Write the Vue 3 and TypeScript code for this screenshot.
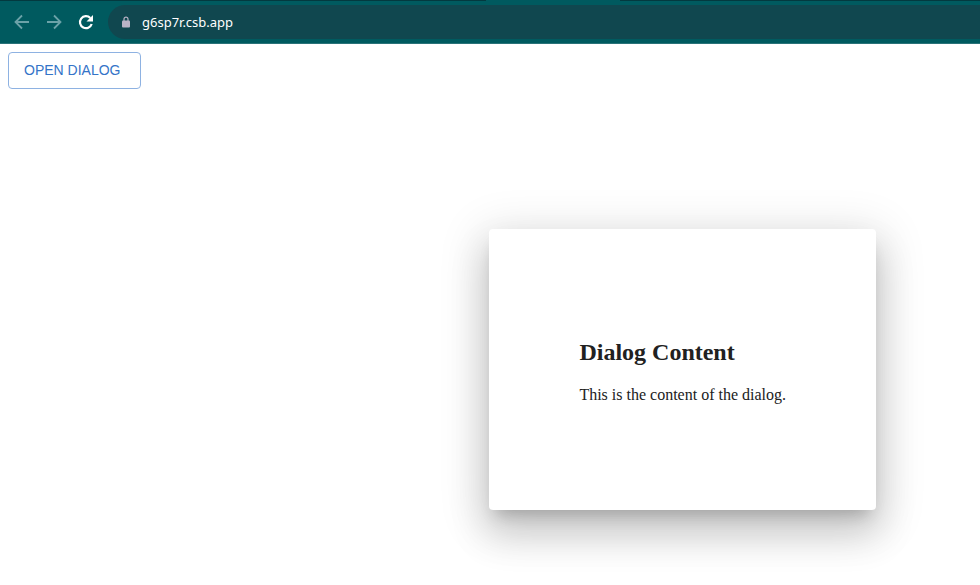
<script setup lang="ts">
import { ref } from 'vue'

const address = ref('g6sp7r.csb.app')
const open = ref(true)
</script>

<template>
  <div class="browser">
    <div class="tab-strip"><div class="active-tab"></div></div>
    <header class="toolbar">
      <nav class="nav" aria-label="Browser navigation">
        <button class="icon-button dim" type="button" aria-label="Back">
          <svg viewBox="0 0 20 20"><path d="M17 10H4M10 3.500L3.500 10l6.500 6.500" /></svg>
        </button>
        <button class="icon-button dim" type="button" aria-label="Forward">
          <svg viewBox="0 0 20 20"><path d="M3 10h13M10 3.500l6.500 6.500-6.500 6.500" /></svg>
        </button>
        <button class="icon-button reload" type="button" aria-label="Reload">
          <svg viewBox="0 0 20 20"><path d="M14.300 6A6 6 0 1 0 15.700 12" /><path class="solid" d="M17 3v6.500h-6.500z" /></svg>
        </button>
      </nav>
      <label class="address">
        <svg class="lock" viewBox="0 0 10 12"><rect x="1" y="4.500" width="8" height="7" rx="1" /><path d="M3 5V3.200a2 2 0 0 1 4 0V5" fill="none" stroke="currentColor" stroke-width="1.200" /></svg>
        <input v-model="address" type="text" aria-label="Address" spellcheck="false" />
      </label>
    </header>
    <main class="page">
      <button class="open-button" type="button" @click="open = true">OPEN DIALOG</button>
      <section v-if="open" class="dialog" role="dialog" aria-labelledby="dialog-title">
        <h2 id="dialog-title">Dialog Content</h2>
        <p>This is the content of the dialog.</p>
      </section>
    </main>
  </div>
</template>

<style>
body {
  background: #fff;
}
</style>

<style scoped>
.browser {
  display: flex;
  flex-direction: column;
  min-height: 100vh;
  overflow: hidden;
}
.tab-strip {
  height: 1px;
  padding-left: 486px;
  background: #03393f;
}
.active-tab {
  width: 134px;
  height: 1px;
  background: #005a5f;
}
.toolbar {
  display: flex;
  align-items: center;
  box-sizing: border-box;
  height: 43px;
  padding-left: 12px;
  gap: 12px;
  border-bottom: 1px solid #2a7278;
  background: #005a5f;
}
.nav {
  display: flex;
  gap: 12px;
}
.icon-button {
  display: flex;
  padding: 0;
  border: 0;
  background: none;
  color: #fff;
}
.icon-button.dim {
  color: #6ba2a8;
}
.icon-button svg {
  width: 20px;
  height: 20px;
  fill: none;
  stroke: currentColor;
  stroke-width: 1.8;
}
.icon-button.reload svg {
  stroke-width: 2.2;
}
.icon-button .solid {
  fill: currentColor;
  stroke: none;
}
.address {
  display: flex;
  flex: 1;
  align-items: center;
  gap: 11px;
  height: 34px;
  padding-left: 13px;
  border-radius: 17px 0 0 17px;
  background: #10474f;
}
.lock {
  width: 10px;
  height: 12px;
  color: #b9b3c6;
  fill: currentColor;
}
.address input {
  flex: 1;
  min-width: 0;
  padding: 0;
  border: 0;
  outline: 0;
  background: none;
  color: #fff;
  font: 13px "Noto Sans", sans-serif;
}
.page {
  display: flex;
  flex: 1;
  flex-direction: column;
  align-items: flex-start;
  padding: 8px;
}
.open-button {
  height: 37px;
  padding: 0 20px 2px 15px;
  border: 1px solid #8eb2e2;
  border-radius: 4px;
  background: #fff;
  color: #3474c8;
  font: 14px "Liberation Sans", Arial, sans-serif;
}
.dialog {
  box-sizing: border-box;
  margin: 140px 96px 0 auto;
  padding: 90px;
  border-radius: 4px;
  background: #fff;
  color: #212121;
  box-shadow: 0 11px 15px -7px rgba(0, 0, 0, 0.2), 0 24px 38px 3px rgba(0, 0, 0, 0.14), 0 9px 46px 8px rgba(0, 0, 0, 0.12);
  font-family: "Liberation Serif", "Times New Roman", serif;
}
.dialog h2 {
  margin: 20px 0;
  font-size: 24px;
  line-height: 27px;
}
.dialog p {
  margin: 16px 0;
  font-size: 16px;
  line-height: 18px;
}
</style>
